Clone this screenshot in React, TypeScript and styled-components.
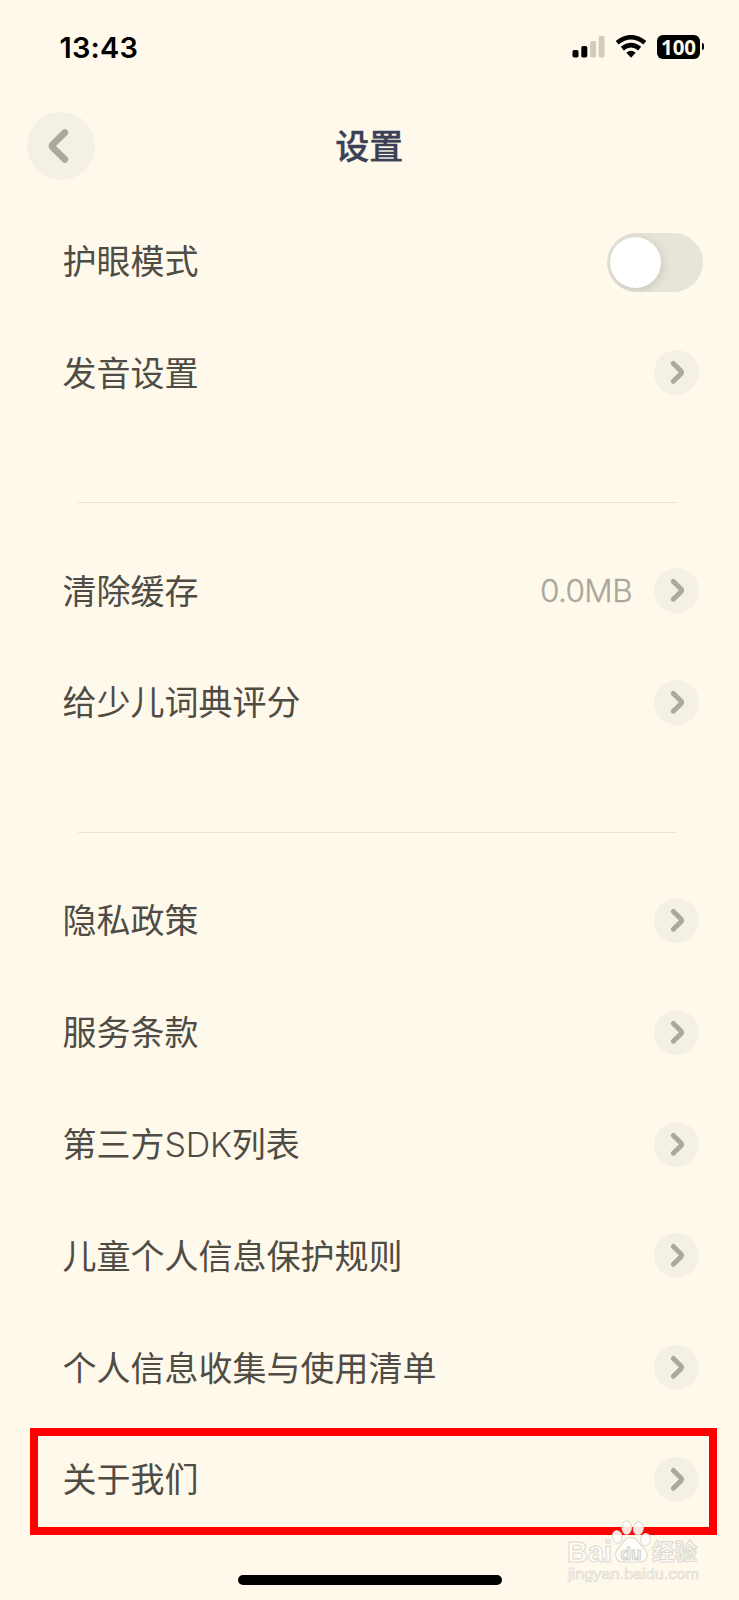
import React from 'react';
import styled, { createGlobalStyle } from 'styled-components';

const Global = createGlobalStyle`
  * { box-sizing: border-box; }
  body { margin: 0; background: #fff9eb; }
`;

const Screen = styled.main`
  position: relative;
  display: flex;
  flex-direction: column;
  width: 739px;
  height: 1600px;
  overflow: hidden;
  background: #fff9eb;
  color: #4e4c44;
  font-family: Inter, 'Noto Sans CJK SC', sans-serif;
`;

const StatusBar = styled.header`
  display: flex;
  align-items: center;
  justify-content: space-between;
  height: 94px;
  padding: 0 35px 0 59.5px;
  color: #000;
`;

const Clock = styled.time`
  padding-top: 1px;
  font-size: 29px;
  font-weight: 600;
  line-height: 34px;
  letter-spacing: 0.2px;
`;

const StatusIcons = styled.div`
  display: flex;
  align-items: center;
  gap: 11px;
  padding-bottom: 1px;

  svg { display: block; }
`;

const BatteryGroup = styled.div`
  display: flex;
  align-items: center;
  gap: 2px;
`;

const Battery = styled.div`
  width: 43px;
  height: 24px;
  border-radius: 6px;
  background: #000;
  color: #fff9eb;
  font: 700 20.5px/24px 'Noto Sans', sans-serif;
  text-align: center;
`;

const BatteryTip = styled.div`
  width: 2px;
  height: 7px;
  border-radius: 0 3px 3px 0;
  background: #000;
`;

const NavBar = styled.nav`
  display: grid;
  grid-template-columns: 68px 1fr 68px;
  align-items: center;
  height: 111px;
  padding: 0 27px 7px 26.5px;
`;

const RoundButton = styled.button<{ $size: number }>`
  display: flex;
  align-items: center;
  justify-content: center;
  flex: none;
  width: ${(p) => p.$size}px;
  height: ${(p) => p.$size}px;
  padding: 0;
  border: 0;
  border-radius: 50%;
  background: #f5f0e4;
`;

const Title = styled.h1`
  margin: 0;
  padding-top: 2px;
  color: #3a4055;
  font-size: 34px;
  font-weight: 500;
  line-height: 48px;
  text-align: center;
  -webkit-text-stroke: 0.35px #3a4055;
`;

const Group = styled.section`
  display: flex;
  flex-direction: column;
`;

const Row = styled.div`
  position: relative;
  display: flex;
  align-items: center;
  height: 111.8px;
  padding: 0 40px 0 62.5px;
`;

const Label = styled.span`
  flex: 1;
  padding-top: 2px;
  font-size: 34px;
  line-height: 48px;
  font-weight: 400;
`;

const Latin = styled.span`
  font-family: Inter, sans-serif;
  font-weight: 300;
  letter-spacing: -0.2px;
`;

const Value = styled.span`
  margin-right: 22px;
  color: #aaa89d;
  font-family: Inter, sans-serif;
  font-size: 31.5px;
  font-weight: 300;
  letter-spacing: -0.6px;
  -webkit-text-stroke: 0.3px #aaa89d;
`;

const Divider = styled.hr`
  width: 599px;
  height: 1px;
  margin: 73.4px 0 31.8px 77.5px;
  border: 0;
  background: #e6e4d7;
`;

const Switch = styled.button`
  width: 96.5px;
  height: 59px;
  margin: 3px -4px 0 0;
  padding: 4px 3px;
  border: 0;
  border-radius: 30px;
  overflow: hidden;
  background: #e7e5d9;
`;

const Knob = styled.span`
  display: block;
  width: 51px;
  height: 51px;
  border-radius: 50%;
  background: #fff;
  box-shadow: 1px 2px 10px rgba(70, 65, 50, 0.2);
`;

const Highlight = styled.div`
  position: absolute;
  inset: 4px 22px 0.5px 30px;
  border: 8px solid #fe0000;
  pointer-events: none;
`;

const HomeIndicator = styled.div`
  width: 264px;
  height: 10px;
  margin: auto auto 15px 238px;
  border-radius: 5px;
  background: #000;
`;

const Watermark = styled.svg`
  position: absolute;
  left: 560px;
  top: 1516px;
`;

const BackChevron = () => (
  <svg width="68" height="68" viewBox="0 0 68 68" fill="none">
    <path d="M37.8 20.5L25.8 32.4Q24.4 34 25.8 35.6L37.8 47.3" stroke="#aaa99e" strokeWidth="6.8" strokeLinecap="round" strokeLinejoin="round" />
  </svg>
);

const Chevron = () => (
  <svg width="45" height="45" viewBox="0 0 45 45" fill="none">
    <path d="M19.3 13.4L27 21.1Q28 22.4 27 23.7L19.3 31.2" stroke="#aaa99e" strokeWidth="5" strokeLinecap="round" strokeLinejoin="round" />
  </svg>
);

const Signal = () => (
  <svg width="33" height="22" viewBox="0 0 33 22">
    <rect x="0.5" y="14" width="6" height="7.5" rx="1.7" />
    <rect x="9.3" y="10" width="6" height="11.5" rx="1.7" />
    <rect x="18.1" y="5" width="6" height="16.5" rx="1.7" fill="#d0ccbd" />
    <rect x="26.7" y="0" width="5.8" height="21.5" rx="1.7" fill="#d0ccbd" />
  </svg>
);

const Wifi = () => (
  <svg width="30" height="23" viewBox="0 0 30 23" fill="none" stroke="#000" strokeWidth="4.6">
    <path d="M1.2 7.8Q15-3.3 28.8 7.8" />
    <path d="M6.3 13.6Q15 6.6 23.7 13.6" />
    <path d="M10.3 17.7Q15 14 19.7 17.7L15 22.8Z" fill="#000" stroke="none" />
  </svg>
);

const BaiduMark = () => (
  <Watermark width="145" height="74" viewBox="0 0 145 74">
    <g fill="#fffdf8" fillOpacity="0.9" stroke="#dedbd2" strokeWidth="1.1">
      <text x="7" y="46" fontFamily="Liberation Sans, sans-serif" fontSize="29" fontWeight="700" textLength="45" lengthAdjust="spacingAndGlyphs">Bai</text>
      <ellipse cx="57.3" cy="21" rx="4.8" ry="6.3" transform="rotate(-12 57.3 21)" />
      <ellipse cx="66.7" cy="11.5" rx="4.7" ry="6.8" />
      <ellipse cx="78.4" cy="12.2" rx="4.9" ry="6.6" transform="rotate(12 78.4 12.2)" />
      <ellipse cx="85.5" cy="23.8" rx="4.9" ry="6.2" transform="rotate(12 85.5 23.8)" />
      <path d="M71 21.5C64 21.5 64 27 59 31.5C54 36 54 46 63 46H80C89 46 89 36 83 31.5C78 27 78 21.5 71 21.5Z" />
      <text x="60.5" y="43.5" fill="#f8f5ec" stroke="#d4d1c9" fontFamily="Liberation Sans, sans-serif" fontSize="19" fontWeight="700" textLength="21" lengthAdjust="spacingAndGlyphs">du</text>
      <text x="92" y="44" fontFamily="Noto Sans CJK SC, sans-serif" fontSize="22.5" fontWeight="700">经验</text>
      <text x="8" y="62.5" strokeWidth="0.7" fontFamily="Liberation Sans, sans-serif" fontSize="15" fontWeight="400" textLength="131" lengthAdjust="spacingAndGlyphs">jingyan.baidu.com</text>
    </g>
  </Watermark>
);

interface LinkRowProps {
  label: React.ReactNode;
  value?: string;
  highlighted?: boolean;
}

const LinkRow = ({ label, value, highlighted }: LinkRowProps) => (
  <Row>
    <Label>{label}</Label>
    {value && <Value>{value}</Value>}
    <RoundButton $size={45}>
      <Chevron />
    </RoundButton>
    {highlighted && <Highlight />}
  </Row>
);

export default function App() {
  return (
    <>
      <Global />
      <Screen>
        <StatusBar>
          <Clock>13:43</Clock>
          <StatusIcons>
            <Signal />
            <Wifi />
            <BatteryGroup>
              <Battery>100</Battery>
              <BatteryTip />
            </BatteryGroup>
          </StatusIcons>
        </StatusBar>
        <NavBar>
          <RoundButton $size={68} aria-label="返回">
            <BackChevron />
          </RoundButton>
          <Title>设置</Title>
        </NavBar>
        <Group>
          <Row>
            <Label>护眼模式</Label>
            <Switch role="switch" aria-checked={false} aria-label="护眼模式">
              <Knob />
            </Switch>
          </Row>
          <LinkRow label="发音设置" />
        </Group>
        <Divider />
        <Group>
          <LinkRow label="清除缓存" value="0.0MB" />
          <LinkRow label="给少儿词典评分" />
        </Group>
        <Divider />
        <Group>
          <LinkRow label="隐私政策" />
          <LinkRow label="服务条款" />
          <LinkRow label={<>第三方<Latin>SDK</Latin>列表</>} />
          <LinkRow label="儿童个人信息保护规则" />
          <LinkRow label="个人信息收集与使用清单" />
          <LinkRow label="关于我们" highlighted />
        </Group>
        <HomeIndicator />
        <BaiduMark />
      </Screen>
    </>
  );
}
